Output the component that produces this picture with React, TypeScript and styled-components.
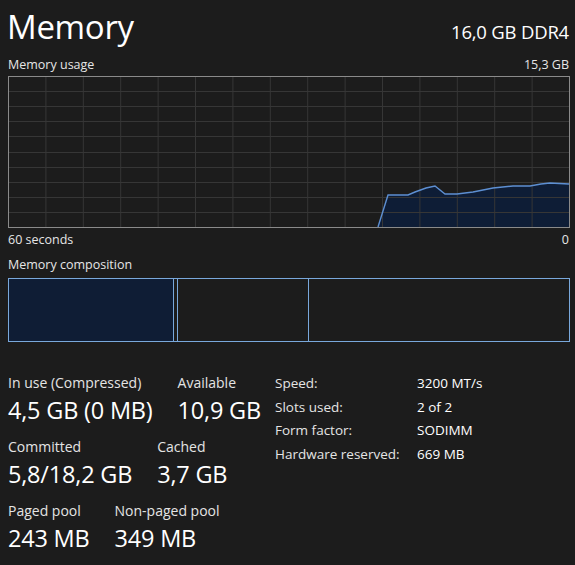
import styled, { createGlobalStyle } from "styled-components";

const GlobalStyle = createGlobalStyle`
  html, body {
    margin: 0;
    padding: 0;
    background: #1c1c1c;
  }
  body {
    font-family: "Open Sans", "Noto Sans", sans-serif;
    color: #ffffff;
  }
`;

// memory usage samples, in chart coords (0..561 x 0..151)
const usage: [number, number][] = [
  [370, 151],
  [380, 119],
  [400, 119],
  [407, 116],
  [418, 112],
  [427, 110],
  [437, 118],
  [449, 118],
  [465, 116],
  [485, 112],
  [505, 110],
  [522, 110],
  [533, 108],
  [542, 107],
  [561, 108],
];

const stats = [
  [
    { label: "In use (Compressed)", value: "4,5 GB (0 MB)" },
    { label: "Available", value: "10,9 GB" },
  ],
  [
    { label: "Committed", value: "5,8/18,2 GB" },
    { label: "Cached", value: "3,7 GB" },
  ],
  [
    { label: "Paged pool", value: "243 MB" },
    { label: "Non-paged pool", value: "349 MB" },
  ],
];

const specs = [
  { label: "Speed:", value: "3200 MT/s" },
  { label: "Slots used:", value: "2 of 2" },
  { label: "Form factor:", value: "SODIMM" },
  { label: "Hardware reserved:", value: "669 MB" },
];

const UsageChart = () => {
  const w = 561;
  const h = 151;
  const cols = 15;
  const rows = 10;
  const line = usage.map(([x, y]) => `${x},${y}`).join(" ");
  const area = `${usage[0][0]},${h} ${line} ${w},${h}`;
  return (
    <ChartSvg viewBox={`0 0 ${w + 1} ${h + 1}`} width={w + 1} height={h + 1}>
      <rect x="0" y="0" width={w + 1} height={h + 1} fill="#1c1c1c" />
      <polygon points={area} fill="#0e1d36" />
      {Array.from({ length: cols - 1 }, (_, i) => (
        <line
          key={`v${i}`}
          x1={((i + 1) * w) / cols + 0.5}
          x2={((i + 1) * w) / cols + 0.5}
          y1="0"
          y2={h}
          stroke="#363636"
        />
      ))}
      {Array.from({ length: rows - 1 }, (_, i) => (
        <line
          key={`h${i}`}
          x1="0"
          x2={w}
          y1={Math.round(((i + 1) * h) / rows) + 0.5}
          y2={Math.round(((i + 1) * h) / rows) + 0.5}
          stroke="#363636"
        />
      ))}
      <polyline points={line} fill="none" stroke="#5d8fd2" strokeWidth="1.4" />
      <rect x="0.5" y="0.5" width={w} height={h} fill="none" stroke="#8a8a8a" />
    </ChartSvg>
  );
};

const App = () => {
  return (
    <>
      <GlobalStyle />
      <Page>
        <Header>
          <Title>Memory</Title>
          <Capacity>16,0 GB DDR4</Capacity>
        </Header>
        <Caption>
          <span>Memory usage</span>
          <span>15,3 GB</span>
        </Caption>
        <UsageChart />
        <Caption $offset={1}>
          <span>60 seconds</span>
          <span>0</span>
        </Caption>
        <Caption $offset={3}>
          <span>Memory composition</span>
        </Caption>
        <Composition>
          <Segment $width={164} $filled />
          <Segment $width={3} />
          <Segment $width={130} />
          <Segment $grow />
        </Composition>
        <Details>
          <StatsColumn>
            {stats.map((row, i) => (
              <StatRow key={i}>
                {row.map((s) => (
                  <Stat key={s.label}>
                    <StatLabel>{s.label}</StatLabel>
                    <StatValue>{s.value}</StatValue>
                  </Stat>
                ))}
              </StatRow>
            ))}
          </StatsColumn>
          <SpecTable>
            {specs.map((s) => (
              <SpecRow key={s.label}>
                <SpecLabel>{s.label}</SpecLabel>
                <SpecValue>{s.value}</SpecValue>
              </SpecRow>
            ))}
          </SpecTable>
        </Details>
      </Page>
    </>
  );
};

export default App;

const Page = styled.div`
  width: 575px;
  height: 565px;
  padding: 0 6px 0 8px;
  box-sizing: border-box;
  overflow: hidden;
`;
const Header = styled.div`
  display: flex;
  justify-content: space-between;
  align-items: baseline;
  height: 54px;
  padding-top: 4px;
  box-sizing: border-box;
`;
const Title = styled.div`
  font-size: 33px;
  line-height: 46px;
  letter-spacing: -0.3px;
  margin-left: -1px;
`;
const Capacity = styled.div`
  font-size: 18.5px;
  line-height: 46px;
  letter-spacing: -0.2px;
`;
const Caption = styled.div<{ $offset?: number }>`
  display: flex;
  justify-content: space-between;
  font-size: 12.5px;
  line-height: 22px;
  color: #e6e6e6;
  margin-top: ${(p) => p.$offset ?? 0}px;
`;
const ChartSvg = styled.svg`
  display: block;
`;
const Composition = styled.div`
  display: flex;
  width: 562px;
  height: 64px;
  margin-top: 2px;
  border: 1px solid #79a8db;
  box-sizing: border-box;
`;
const Segment = styled.div<{ $width?: number; $filled?: boolean; $grow?: boolean }>`
  flex: ${(p) => (p.$grow ? "1" : `0 0 ${p.$width}px`)};
  background: ${(p) => (p.$filled ? "#0f1d35" : "transparent")};
  border-right: ${(p) => (p.$grow ? "none" : "1px solid #79a8db")};
`;
const Details = styled.div`
  display: flex;
  margin-top: 31px;
`;
const StatsColumn = styled.div`
  width: 267px;
  display: flex;
  flex-direction: column;
  gap: 9px;
`;
const StatRow = styled.div`
  display: flex;
  gap: 25px;
`;
const Stat = styled.div`
  display: flex;
  flex-direction: column;
`;
const StatLabel = styled.div`
  font-size: 14px;
  line-height: 20px;
  color: #e4e4e4;
`;
const StatValue = styled.div`
  font-size: 23.5px;
  line-height: 35px;
  letter-spacing: -0.2px;
`;
const SpecTable = styled.div`
  display: flex;
  flex-direction: column;
  margin-top: -2px;
`;
const SpecRow = styled.div`
  display: flex;
  height: 23.7px;
  align-items: center;
`;
const SpecLabel = styled.div`
  width: 142px;
  font-size: 13.5px;
  color: #e4e4e4;
`;
const SpecValue = styled.div`
  font-size: 13.5px;
  color: #ffffff;
`;
